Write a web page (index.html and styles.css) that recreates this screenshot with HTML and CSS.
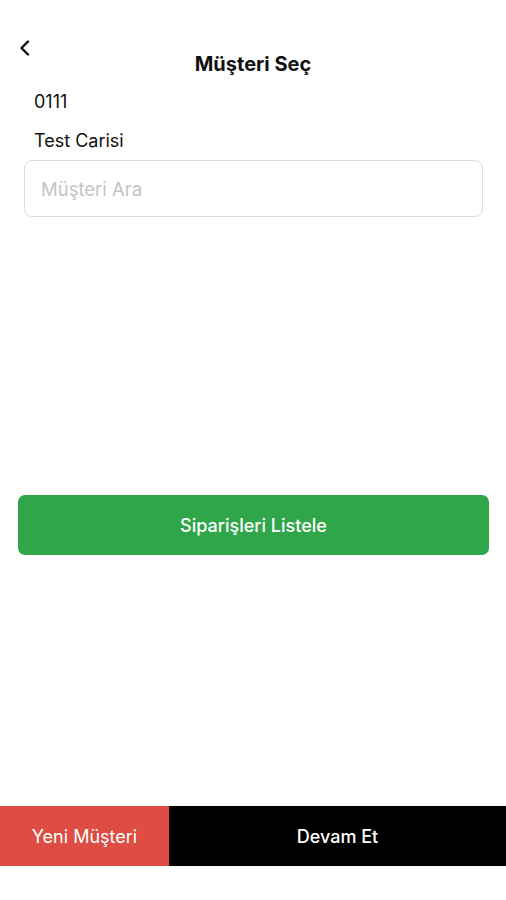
FILE: index.html
```html
<!DOCTYPE html>
<html lang="tr">

<head>
    <meta charset="UTF-8">
    <meta name="viewport" content="width=device-width, initial-scale=1.0">
    <title>Müşteri Seç</title>
    <link rel="stylesheet" href="styles.css">
</head>

<body>

    <div class="screen">
        <div class="header">
            <button class="back" aria-label="Geri">
                <svg width="12" height="16" viewBox="0 0 12 16">
                    <path d="M9 1.5 L2.5 8 L9 14.5" fill="none" stroke="#111" stroke-width="2.4" stroke-linecap="round" stroke-linejoin="round"/>
                </svg>
            </button>
            <h1>Müşteri Seç</h1>
            <span></span>
        </div>

        <div class="customer">
            <div class="code">0111</div>
            <div class="name">Test Carisi</div>
            <input type="text" class="search" placeholder="Müşteri Ara">
        </div>

        <div class="actions">
            <button class="listButton">Siparişleri Listele</button>
        </div>

        <div class="footer">
            <button class="newButton">Yeni Müşteri</button>
            <button class="nextButton">Devam Et</button>
        </div>
    </div>

</body>

</html>
```

FILE: styles.css
```css
body {
    font-family: 'Inter', 'Roboto', sans-serif;
    margin: 0;
    background-color: #fff;
    color: #111;
}

.screen {
    height: 900px;
    display: flex;
    flex-direction: column;
}

.header {
    display: grid;
    grid-template-columns: 60px 1fr 60px;
    padding-top: 40px;
    height: 36px;
}

.back {
    align-self: start;
    justify-self: start;
    margin-left: 19px;
    padding: 0;
    border: none;
    background: none;
    height: 16px;
    cursor: pointer;
}

.header h1 {
    align-self: end;
    margin: 0;
    text-align: center;
    font-size: 20px;
    font-weight: 700;
    line-height: 24px;
    color: #111;
}

.customer {
    padding: 15px 23px 0 24px;
}

.code {
    padding-left: 10px;
    font-size: 18px;
    line-height: 22px;
}

.name {
    padding-left: 10px;
    margin-top: 17px;
    font-size: 18px;
    line-height: 22px;
}

.search {
    box-sizing: border-box;
    width: 100%;
    height: 57px;
    margin-top: 8px;
    padding: 0 16px;
    border: 1px solid #dcdcdc;
    border-radius: 8px;
    font-family: inherit;
    font-size: 18.5px;
    outline: none;
}

.search::placeholder {
    color: #c4c4c4;
}

.actions {
    padding: 278px 17px 0 18px;
}

.listButton {
    width: 100%;
    height: 60px;
    border: none;
    border-radius: 7px;
    background-color: #30a64a;
    color: #fff;
    font-family: inherit;
    font-size: 18px;
    font-weight: 500;
    cursor: pointer;
}

.footer {
    margin-top: auto;
    margin-bottom: 34px;
    display: flex;
    height: 60px;
}

.footer button {
    border: none;
    color: #fff;
    font-family: inherit;
    font-size: 18px;
    font-weight: 500;
    cursor: pointer;
}

.newButton {
    width: 169px;
    background-color: #de4d43;
    font-weight: 400 !important;
}

.nextButton {
    flex: 1;
    background-color: #000;
}
```
